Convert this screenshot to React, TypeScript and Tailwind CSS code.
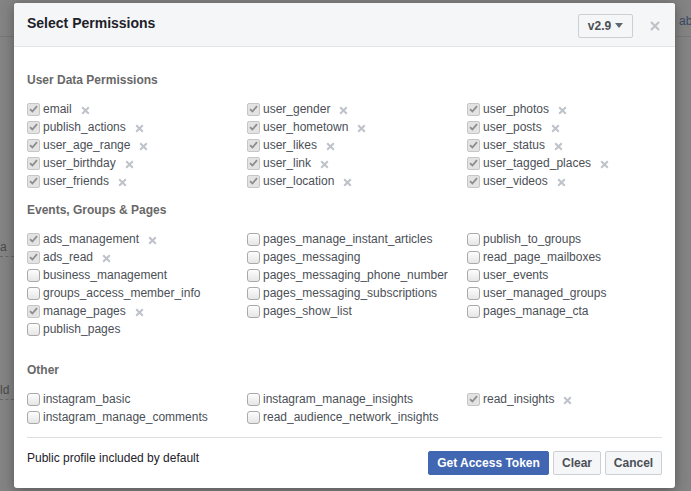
import React from "react";

type Perm = { name: string; on?: boolean };

const userData: Perm[][] = [
  [
    { name: "email", on: true },
    { name: "publish_actions", on: true },
    { name: "user_age_range", on: true },
    { name: "user_birthday", on: true },
    { name: "user_friends", on: true },
  ],
  [
    { name: "user_gender", on: true },
    { name: "user_hometown", on: true },
    { name: "user_likes", on: true },
    { name: "user_link", on: true },
    { name: "user_location", on: true },
  ],
  [
    { name: "user_photos", on: true },
    { name: "user_posts", on: true },
    { name: "user_status", on: true },
    { name: "user_tagged_places", on: true },
    { name: "user_videos", on: true },
  ],
];

const events: Perm[][] = [
  [
    { name: "ads_management", on: true },
    { name: "ads_read", on: true },
    { name: "business_management" },
    { name: "groups_access_member_info" },
    { name: "manage_pages", on: true },
    { name: "publish_pages" },
  ],
  [
    { name: "pages_manage_instant_articles" },
    { name: "pages_messaging" },
    { name: "pages_messaging_phone_number" },
    { name: "pages_messaging_subscriptions" },
    { name: "pages_show_list" },
  ],
  [
    { name: "publish_to_groups" },
    { name: "read_page_mailboxes" },
    { name: "user_events" },
    { name: "user_managed_groups" },
    { name: "pages_manage_cta" },
  ],
];

const other: Perm[][] = [
  [{ name: "instagram_basic" }, { name: "instagram_manage_comments" }],
  [{ name: "instagram_manage_insights" }, { name: "read_audience_network_insights" }],
  [{ name: "read_insights", on: true }],
];

const Check = ({ on }: { on?: boolean }) =>
  on ? (
    <span className="flex h-[13px] w-[13px] shrink-0 items-center justify-center rounded-[2px] border border-[#c6c6c6] bg-[#e3e3e3]">
      <svg width="9" height="8" viewBox="0 0 9 8">
        <path d="M1 4.2 L3.4 6.5 L8 1.2" fill="none" stroke="#8d8d8d" strokeWidth="1.8" />
      </svg>
    </span>
  ) : (
    <span className="h-[13px] w-[13px] shrink-0 rounded-[3px] border border-[#a9a9a9] bg-gradient-to-b from-[#fdfdfd] to-[#e6e6e6]" />
  );

const Remove = () => (
  <svg width="9" height="9" viewBox="0 0 9 9" className="ml-[9px] mt-[2px] shrink-0">
    <path d="M1.2 1.2 L7.8 7.8 M7.8 1.2 L1.2 7.8" stroke="#bec2c9" strokeWidth="2" />
  </svg>
);

const Row = ({ p }: { p: Perm }) => (
  <div className="flex h-[18px] items-center">
    <Check on={p.on} />
    <span className="ml-[3px] whitespace-nowrap text-[12px] text-[#4b4f56]">{p.name}</span>
    {p.on && <Remove />}
  </div>
);

const Section = ({ title, cols, className }: { title: string; cols: Perm[][]; className?: string }) => (
  <div className={className}>
    <div className="mb-[12px] text-[12px] font-bold leading-[16px] text-[#686868]">{title}</div>
    <div className="flex">
      {cols.map((col, i) => (
        <div key={i} className="flex w-[220px] shrink-0 flex-col">
          {col.map((p) => (
            <Row key={p.name} p={p} />
          ))}
        </div>
      ))}
    </div>
  </div>
);

export default function App() {
  return (
    <div className="relative h-[491px] w-[691px] overflow-hidden bg-[#838383] font-['Liberation_Sans',Arial,sans-serif]">
      <div className="absolute left-0 top-[36px] h-px w-full bg-[#777]" />
      <span className="absolute left-[679px] top-[12px] text-[12px] text-[#3b4a66]">ab</span>
      <span className="absolute left-0 top-[238px] text-[12px] text-[#4a4a4a]">a</span>
      <div className="absolute left-0 top-[256px] w-[14px] border-t border-dashed border-[#666]" />
      <span className="absolute left-0 top-[381px] text-[12px] text-[#4a4a4a]">ld</span>
      <div className="absolute left-0 top-[399px] w-[14px] border-t border-dashed border-[#666]" />

      <div className="relative ml-[14px] mt-[3px] flex h-[485px] w-[661px] flex-col rounded-[3px] bg-white shadow-[0_2px_12px_rgba(0,0,0,0.35)]">
        <div className="flex h-[44px] items-center rounded-t-[3px] border-b border-[#e5e5e5] bg-[#f5f6f7] pl-[13px] pr-[13px]">
          <div className="flex-1 pb-[2px] text-[14px] font-bold text-[#1d2129]">Select Permissions</div>
          <div className="mt-[2px] flex h-[24px] w-[55px] items-center justify-center gap-[4px] rounded-[2px] border border-[#ccd0d5] bg-[#f5f6f7] text-[12px] font-bold text-[#4b4f56]">
            v2.9
            <svg width="8" height="5" viewBox="0 0 8 5">
              <path d="M0 0 H8 L4 5 Z" fill="#606770" />
            </svg>
          </div>
          <svg width="10" height="10" viewBox="0 0 10 10" className="ml-[17px] mr-[2px] mt-[2px]">
            <path d="M1 1 L9 9 M9 1 L1 9" stroke="#bec2c9" strokeWidth="2.2" />
          </svg>
        </div>

        <div className="flex flex-1 flex-col px-[13px] pt-[25px]">
          <Section title="User Data Permissions" cols={userData} />
          <Section title="Events, Groups & Pages" cols={events} className="mt-[12px]" />
          <Section title="Other" cols={other} className="mt-[24px]" />

          <div className="mt-[11px] flex items-start border-t border-[#dddfe2] pt-[11px]">
            <div className="flex-1 text-[12px] text-[#1d2129]">Public profile included by default</div>
            <div className="mt-[2px] flex gap-[4px]">
              <button className="h-[24px] w-[121px] rounded-[2px] border border-[#4267b2] bg-[#4267b2] text-[12px] font-bold text-white">
                Get Access Token
              </button>
              <button className="h-[24px] w-[48px] rounded-[2px] border border-[#ccd0d5] bg-[#f5f6f7] text-[12px] font-bold text-[#4b4f56]">
                Clear
              </button>
              <button className="h-[24px] w-[57px] rounded-[2px] border border-[#ccd0d5] bg-[#f5f6f7] text-[12px] font-bold text-[#4b4f56]">
                Cancel
              </button>
            </div>
          </div>
        </div>
      </div>
    </div>
  );
}
